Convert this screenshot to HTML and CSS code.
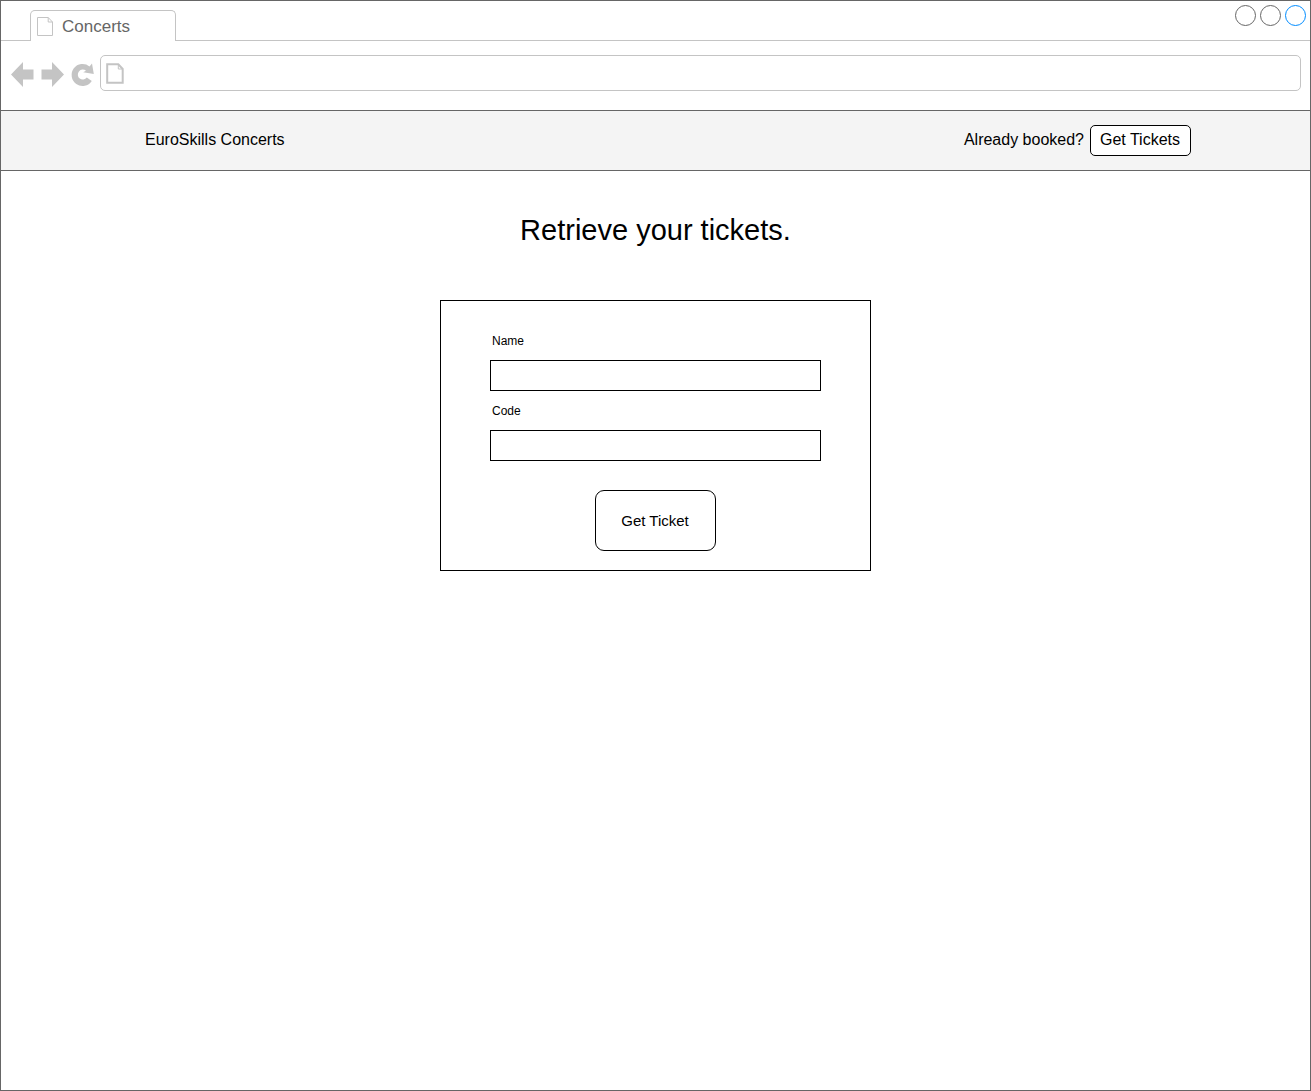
FILE: index.html
```html
<!DOCTYPE html>
<html lang="en">
<head>
<meta charset="utf-8">
<meta name="viewport" content="width=device-width, initial-scale=1">
<title>Concerts</title>
<link rel="stylesheet" href="styles.css">
</head>
<body>
<div class="window">
  <div class="tab-strip">
    <div class="tab">
      <svg class="tab-icon" width="16" height="19" viewBox="0 0 16 19" aria-hidden="true"><path d="M.5.5H11.2L15.500 5V18.500H.5ZM11.200.5V5H15.500"/></svg>
      <span>Concerts</span>
    </div>
    <div class="window-controls">
      <button class="dot" type="button" aria-label="Minimize"></button>
      <button class="dot" type="button" aria-label="Maximize"></button>
      <button class="dot dot-active" type="button" aria-label="Close"></button>
    </div>
  </div>
  <div class="toolbar">
    <button class="nav-button" type="button" aria-label="Back"><svg width="23" height="25" viewBox="0 0 23 25"><path d="M0 12.500 12 0V7.500H22.500V17.500H12V25Z"/></svg></button>
    <button class="nav-button" type="button" aria-label="Forward"><svg width="23" height="25" viewBox="0 0 23 25"><path d="M23 12.500 11 0V7.500H.5V17.500H11V25Z"/></svg></button>
    <button class="nav-button" type="button" aria-label="Reload"><svg width="22" height="25" viewBox="0 0 22 25"><path d="M21 1.500 22.800 12 12.200 10.200 15 8.700A5 5 0 1 0 15.800 15.600L20.800 19A11 11 0 1 1 18.500 4.400Z"/></svg></button>
    <div class="address">
      <svg class="page-icon" width="18" height="21" viewBox="0 0 18 21" aria-hidden="true"><path d="M1.200 1.200H12.300L16.700 6V19.700H1.200Z"/><path class="fold" d="M12.300 1V6H17"/></svg>
      <input class="address-input" type="text" aria-label="Address">
    </div>
  </div>
  <header class="site-header">
    <div class="brand">EuroSkills Concerts</div>
    <div class="booked">
      <span>Already booked?</span>
      <button class="tickets-button" type="button">Get Tickets</button>
    </div>
  </header>
  <main class="content">
    <h1 class="title">Retrieve your tickets.</h1>
    <form class="ticket-form">
      <label class="label" for="name">Name</label>
      <input class="field" id="name" type="text">
      <label class="label" for="code">Code</label>
      <input class="field" id="code" type="text">
      <button class="submit" type="button">Get Ticket</button>
    </form>
  </main>
</div>
</body>
</html>
```
FILE: styles.css
```css
* {
  box-sizing: border-box;
}

body {
  margin: 0;
  background: #fff;
  color: #000;
  font: 16px/20px "Liberation Sans", Arial, sans-serif;
}

button,
input {
  margin: 0;
  padding: 0;
  border: 0;
  background: none;
  color: inherit;
  font: inherit;
}

svg {
  display: block;
  overflow: visible;
}

.window {
  min-height: 100vh;
  border: 1px solid #666;
}

.tab-strip {
  display: flex;
  height: 40px;
}

.tab-strip::before {
  content: "";
  width: 29px;
  border-bottom: 1px solid #c4c4c4;
}

.tab {
  display: flex;
  align-items: center;
  gap: 9px;
  width: 146px;
  margin-top: 9px;
  padding-left: 6px;
  border: 1px solid #c4c4c4;
  border-bottom: 0;
  border-radius: 5px 5px 0 0;
  color: #666;
  font-size: 17px;
  line-height: 19px;
}

.tab-icon {
  fill: none;
  stroke: #c4c4c4;
}

.window-controls {
  flex: 1;
  display: flex;
  justify-content: flex-end;
  gap: 4px;
  padding: 4px 4px 0 0;
  border-bottom: 1px solid #c4c4c4;
}

.dot {
  width: 21px;
  height: 21px;
  border: 1px solid #666;
  border-radius: 50%;
}

.dot-active {
  border-color: #008cff;
}

.toolbar {
  display: flex;
  align-items: center;
  gap: 7px;
  padding: 14px 9px 19px 10px;
}

.nav-button {
  flex: none;
  padding-top: 3px;
  fill: #c4c4c4;
}

.address {
  flex: 1;
  display: flex;
  align-items: center;
  gap: 6px;
  height: 36px;
  padding: 0 5px;
  border: 1px solid #c4c4c4;
  border-radius: 5px;
}

.page-icon {
  flex: none;
  fill: none;
  stroke: #c4c4c4;
  stroke-width: 2;
}

.fold {
  stroke-width: 1;
}

.address-input {
  flex: 1;
  min-width: 0;
  height: 100%;
  outline: 0;
}

.site-header {
  display: flex;
  align-items: center;
  justify-content: space-between;
  padding: 14px 119px 14px 144px;
  border: solid #666;
  border-width: 1px 0;
  background: #f4f4f4;
  line-height: 18px;
}

.brand,
.booked span {
  padding-bottom: 2px;
}

.booked {
  display: flex;
  align-items: center;
  gap: 6px;
}

.tickets-button {
  width: 101px;
  height: 31px;
  padding: 0 1px 2px 0;
  border: 1px solid #000;
  border-radius: 5px;
  background: #fff;
}

.content {
  display: flex;
  flex-direction: column;
  align-items: center;
  padding: 41px 20px;
}

.title {
  margin: 0 0 52px;
  font-size: 29px;
  font-weight: 400;
  line-height: 36px;
}

.ticket-form {
  display: flex;
  flex-direction: column;
  width: 100%;
  max-width: 431px;
  padding: 30px 49px 19px;
  border: 1px solid #000;
}

.label {
  margin-bottom: 9px;
  padding-left: 2px;
  font-size: 12px;
  line-height: 20px;
}

.field {
  height: 31px;
  margin-bottom: 10px;
  padding: 0 8px;
  border: 1px solid #000;
}

.submit {
  align-self: center;
  width: 121px;
  height: 61px;
  margin-top: 19px;
  padding-right: 1px;
  border: 1px solid #000;
  border-radius: 9px;
  font-size: 15px;
}
```
